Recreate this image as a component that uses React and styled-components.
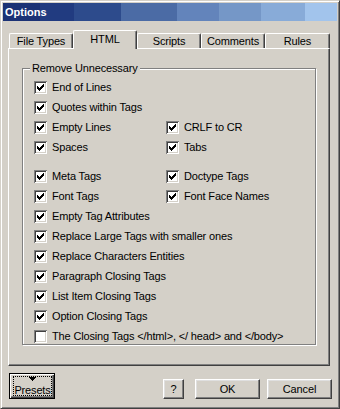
import React from 'react';
import styled, { createGlobalStyle } from 'styled-components';

const GlobalStyle = createGlobalStyle`
  html, body { margin: 0; padding: 0; background: #d4d0c8; }
  body {
    font-family: "Liberation Sans", Arial, sans-serif;
    font-size: 11px;
    letter-spacing: -0.15px;
    color: #000;
  }
  * { box-sizing: border-box; }
`;

const Window = styled.div`
  width: 340px;
  height: 409px;
  background: #d4d0c8;
  border: 1px solid;
  border-color: #d4d0c8 #404040 #404040 #d4d0c8;
  box-shadow: inset 1px 1px #fff, inset -1px -1px #808080;
  padding: 2px;
  display: flex;
  flex-direction: column;
`;

const TitleBar = styled.div`
  height: 18px;
  flex: none;
  padding-left: 2px;
  line-height: 18px;
  color: #fff;
  font-weight: bold;
  letter-spacing: 0;
  background: linear-gradient(
    to right,
    #1b3275 0 37px,
    #213b80 37px 71px,
    #2d4b8c 71px 118px,
    #4b6ba5 118px 174px,
    #6384bb 174px 216px,
    #7597c7 216px 258px,
    #88abd8 258px 302px,
    #a2c4ec 302px
  );
`;

const Body = styled.div`
  padding: 9px 0 0 5px;
  display: flex;
  flex-direction: column;
`;

const TabStrip = styled.div`
  display: flex;
  align-items: flex-end;
  height: 18px;
  padding-left: 1px;
  position: relative;
  z-index: 1;
`;

const Tab = styled.div`
  width: ${p => p.$w}px;
  height: ${p => (p.$active ? 19 : 15)}px;
  margin-bottom: ${p => (p.$active ? -1 : 0)}px;
  padding-top: ${p => (p.$active ? 2 : 1)}px;
  background: #d4d0c8;
  border-top: 1px solid #fff;
  border-left: 1px solid #fff;
  border-right: 1px solid #404040;
  border-top-left-radius: 2px;
  border-top-right-radius: 2px;
  box-shadow: inset -1px 0 #808080;
  line-height: 13px;
  text-align: center;
  white-space: nowrap;
`;

const Panel = styled.div`
  width: 322px;
  height: 318px;
  border: 1px solid;
  border-color: #fff #404040 #404040 #fff;
  box-shadow: inset -1px -1px #808080;
  padding: 19px 0 0 13px;
`;

const Group = styled.div`
  position: relative;
  width: 294px;
  height: 277px;
  border: 1px solid #808080;
  box-shadow: inset 1px 1px #fff, 1px 1px #fff;
  padding: 12px 0 0 11px;
`;

const Legend = styled.div`
  position: absolute;
  top: -7px;
  left: 7px;
  padding: 0 2px;
  line-height: 13px;
  background: #d4d0c8;
  white-space: nowrap;
`;

const Grid = styled.div`
  display: grid;
  grid-template-columns: 132px 1fr;
  row-gap: 7px;
`;

const Item = styled.label`
  display: flex;
  align-items: center;
  gap: 5px;
  height: 13px;
  line-height: 13px;
  white-space: nowrap;
  grid-column: ${p => (p.$span ? '1 / -1' : 'auto')};
  margin-top: ${p => p.$gap || 0}px;
`;

const Box = styled.span`
  display: block;
  flex: none;
  width: 13px;
  height: 13px;
  background: #fff;
  box-shadow: inset 1px 1px #808080, inset -1px -1px #fff,
    inset 2px 2px #404040, inset -2px -2px #d4d0c8;
  svg { display: block; }
`;

const CheckMark = () => (
  <svg width="13" height="13" viewBox="0 0 13 13" shapeRendering="crispEdges">
    {[[3, 5], [4, 6], [5, 7], [6, 6], [7, 5], [8, 4], [9, 3]].map(([x, y]) => (
      <rect key={x} x={x} y={y} width="1" height="3" fill="#000" />
    ))}
  </svg>
);

const Check = ({ label, checked = true, span, gap }) => (
  <Item $span={span} $gap={gap}>
    <Box>{checked && <CheckMark />}</Box>
    <span>{label}</span>
  </Item>
);

const ButtonRow = styled.div`
  display: flex;
  align-items: flex-end;
  width: 324px;
  margin-top: 7px;
  padding-left: 1px;
`;

const Button = styled.div`
  width: ${p => p.$w}px;
  height: 20px;
  margin-left: ${p => (p.$ml === 'auto' ? 'auto' : `${p.$ml || 0}px`)};
  border: 1px solid;
  border-color: #fff #404040 #404040 #fff;
  box-shadow: inset -1px -1px #808080, inset 1px 1px #dfdfdf;
  display: flex;
  align-items: center;
  justify-content: center;
  line-height: 13px;
`;

const DefaultButton = styled.div`
  width: 46px;
  height: 26px;
  border: 1px solid #000;
  box-shadow: inset 1px 1px #fff, inset -1px -1px #404040, inset -2px -2px #808080;
  padding: 2px 2px 2px 3px;
`;

const FocusRect = styled.div`
  height: 20px;
  border: 1px dotted #000;
  display: flex;
  flex-direction: column;
  align-items: center;
  overflow: visible;
  svg { display: block; flex: none; }
`;

const PresetLabel = styled.div`
  flex: none;
  margin-top: 3px;
  line-height: 13px;
  height: 13px;
`;

const Arrow = () => (
  <svg width="7" height="4" viewBox="0 0 7 4" shapeRendering="crispEdges">
    <rect x="0" y="0" width="7" height="1" fill="#000" />
    <rect x="1" y="1" width="5" height="1" fill="#000" />
    <rect x="2" y="2" width="3" height="1" fill="#000" />
    <rect x="3" y="3" width="1" height="1" fill="#000" />
  </svg>
);

export default function App() {
  return (
    <>
      <GlobalStyle />
      <Window>
        <TitleBar>Options</TitleBar>
        <Body>
          <TabStrip>
            <Tab $w={64}>File Types</Tab>
            <Tab $w={64} $active>HTML</Tab>
            <Tab $w={64}>Scripts</Tab>
            <Tab $w={64}>Comments</Tab>
            <Tab $w={65}>Rules</Tab>
          </TabStrip>
          <Panel>
            <Group>
              <Legend>Remove Unnecessary</Legend>
              <Grid>
                <Check label="End of Lines" span />
                <Check label="Quotes within Tags" span />
                <Check label="Empty Lines" />
                <Check label="CRLF to CR" />
                <Check label="Spaces" />
                <Check label="Tabs" />
                <Check label="Meta Tags" gap={9} />
                <Check label="Doctype Tags" gap={9} />
                <Check label="Font Tags" />
                <Check label="Font Face Names" />
                <Check label="Empty Tag Attributes" span />
                <Check label="Replace Large Tags with smaller ones" span />
                <Check label="Replace Characters Entities" span />
                <Check label="Paragraph Closing Tags" span />
                <Check label="List Item Closing Tags" span />
                <Check label="Option Closing Tags" span />
                <Check
                  label="The Closing Tags </html>, </ head> and </body>"
                  checked={false}
                  span
                />
              </Grid>
            </Group>
          </Panel>
          <ButtonRow>
            <DefaultButton>
              <FocusRect>
                <Arrow />
                <PresetLabel>Presets</PresetLabel>
              </FocusRect>
            </DefaultButton>
            <Button $w={21} $ml="auto">?</Button>
            <Button $w={65} $ml={11}>OK</Button>
            <Button $w={65} $ml={7}>Cancel</Button>
          </ButtonRow>
        </Body>
      </Window>
    </>
  );
}
